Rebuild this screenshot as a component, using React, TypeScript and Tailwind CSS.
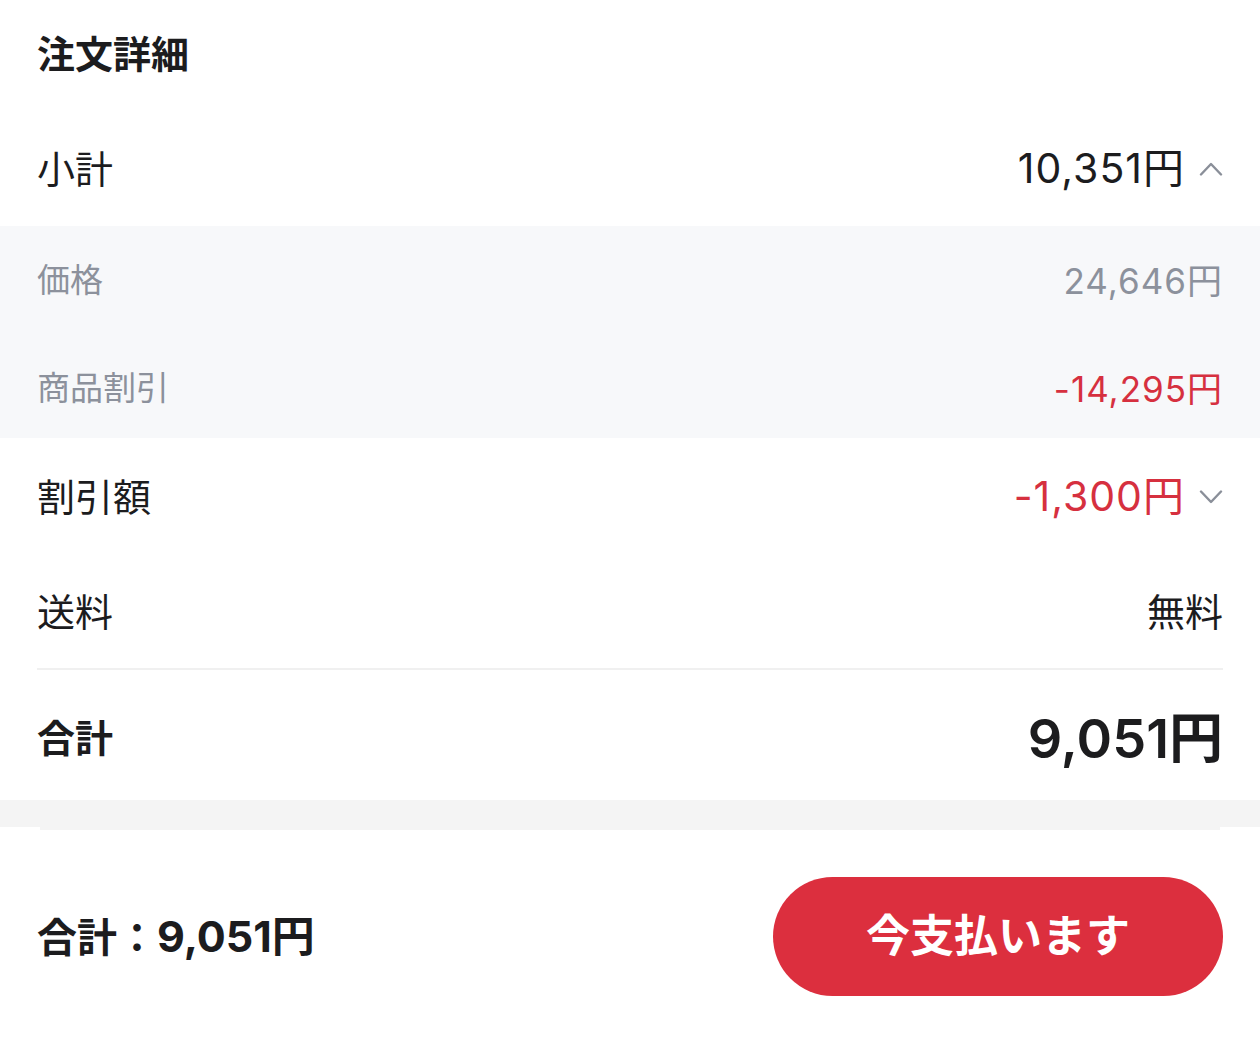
import type { ReactNode } from "react";

const font = {
  fontFamily: '"Inter", "Noto Sans CJK JP", sans-serif',
};

function Chevron({ up }: { up?: boolean }) {
  return (
    <svg width="24" height="14" viewBox="0 0 24 14" fill="none" className="ml-[14px] shrink-0">
      <path
        d={up ? "M2 12.5 L12 2 L22 12.5" : "M2 1.5 L12 12 L22 1.5"}
        stroke="#8a8f99"
        strokeWidth="2.4"
        strokeLinecap="round"
        strokeLinejoin="round"
      />
    </svg>
  );
}

function Row({
  label,
  children,
  className,
}: {
  label: ReactNode;
  children: ReactNode;
  className: string;
}) {
  return (
    <div className={`flex items-center justify-between px-[37px] ${className}`}>
      <span>{label}</span>
      <div className="flex items-center">{children}</div>
    </div>
  );
}

export default function App() {
  return (
    <div className="min-h-[1053px] w-full bg-white text-[#1c1c1e]" style={font}>
      <div className="flex h-[108px] items-center px-[37px] text-[38px] font-bold">注文詳細</div>

      <Row label="小計" className="h-[118px] pt-[4px] text-[38px]">
        <span className="text-[41px] tracking-[1px]">10,351円</span>
        <Chevron up />
      </Row>

      <div className="bg-[#f7f8fa] text-[33px] text-[#8c919c]">
        <Row label="価格" className="h-[106px] pt-[4px]">
          <span className="text-[35px] tracking-[1px]">24,646円</span>
        </Row>
        <Row label="商品割引" className="h-[106px] pt-[8px]">
          <span className="text-[35px] tracking-[1px] text-[#d6303f]">-14,295円</span>
        </Row>
      </div>

      <Row label="割引額" className="h-[118px] text-[38px]">
        <span className="text-[41px] tracking-[1px] text-[#d6303f]">-1,300円</span>
        <Chevron />
      </Row>

      <Row label="送料" className="h-[112px] text-[38px]">
        <span>無料</span>
      </Row>

      <div className="mx-[37px] h-[2px] bg-[#f0f0f0]" />

      <Row label="合計" className="h-[130px] pt-[6px] text-[38px] font-bold">
        <span className="text-[54px] font-semibold">9,051円</span>
      </Row>

      <div className="h-[27px] bg-[#f4f4f4]" />
      <div className="mx-[40px] h-[3px] bg-[#f4f4f4]" />

      <div className="flex h-[212px] items-center justify-between px-[37px]">
        <span className="text-[40px] font-bold">
          合計：<span className="text-[43px]">9,051円</span>
        </span>
        <button
          type="button"
          className="flex h-[119px] w-[450px] items-center justify-center rounded-full bg-[#dc2f3e] text-[44px] font-bold text-white"
        >
          今支払います
        </button>
      </div>
    </div>
  );
}
